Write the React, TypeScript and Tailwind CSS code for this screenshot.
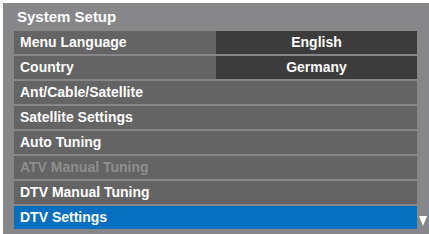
const items: { label: string; value?: string; dim?: boolean; active?: boolean }[] = [
  { label: "Menu Language", value: "English" },
  { label: "Country", value: "Germany" },
  { label: "Ant/Cable/Satellite" },
  { label: "Satellite Settings" },
  { label: "Auto Tuning" },
  { label: "ATV Manual Tuning", dim: true },
  { label: "DTV Manual Tuning" },
  { label: "DTV Settings", active: true },
];

export default function App() {
  return (
    <div
      className="w-[429px] h-[234px] bg-white pt-[3px] pl-[3px] overflow-hidden"
      style={{ fontFamily: '"Liberation Sans", Arial, sans-serif' }}
    >
      <div className="h-full bg-[#87878a] flex flex-col">
        <div className="h-[28px] flex items-center pl-[14px] text-[15px] font-bold text-white">
          System Setup
        </div>
        <div className="flex flex-col gap-[2px] pl-[11px]">
          {items.map((it) => (
            <div key={it.label} className="flex items-center">
              <div
                className={
                  "w-[403px] h-[23px] flex text-[14px] font-bold " +
                  (it.active ? "bg-[#0670c0]" : "bg-[#646464]")
                }
              >
                <div
                  className={
                    "flex-1 flex items-center pl-[6px] " +
                    (it.dim ? "text-[#8e8e8e]" : "text-white")
                  }
                >
                  {it.label}
                </div>
                {it.value && (
                  <div className="w-[201px] ml-[1px] bg-[#3c3c3c] flex items-center justify-center text-white">
                    {it.value}
                  </div>
                )}
              </div>
              {it.active && (
                <svg width="8" height="10" viewBox="0 0 8 10" className="ml-[2px] mt-[6px]">
                  <polygon points="0,0 8,0 4,10" fill="#ffffff" />
                </svg>
              )}
            </div>
          ))}
        </div>
      </div>
    </div>
  );
}
